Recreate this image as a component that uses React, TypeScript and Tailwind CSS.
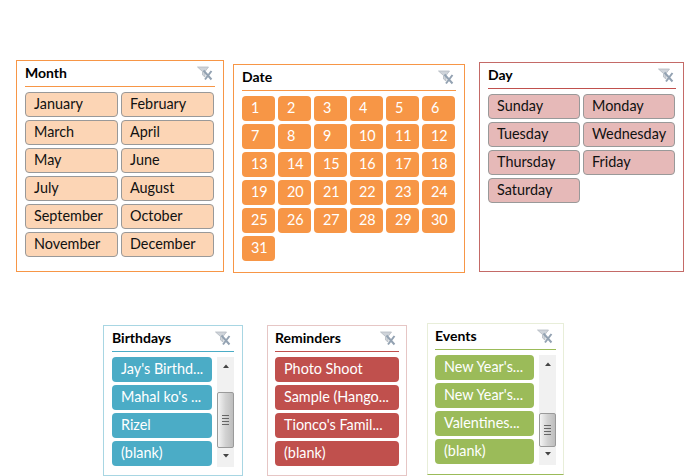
import React from "react";

function ClearIcon() {
  return (
    <svg width="16" height="15" viewBox="0 0 16 15" className="shrink-0">
      <path d="M0.500 1 H11.500 L8 5.500 V11 L5.500 9 V5.500 Z" fill="#cfd4da" stroke="#b4bac2" strokeWidth="0.8" />
      <path d="M6.500 4.500 L14.500 13.500 M14.500 5 L8 13.500" stroke="#93a2b2" strokeWidth="2" fill="none" />
    </svg>
  );
}

function Item({ label, cls }: { label: string; cls: string }) {
  return <div className={`h-[25px] flex items-center rounded-[4px] whitespace-nowrap overflow-hidden text-[14.4px] leading-none pb-[1px] ${cls}`}>{label}</div>;
}

function Header({ title, lineCls, iconCls }: { title: string; lineCls: string; iconCls: string }) {
  return (
    <div className={`h-[26px] flex items-center justify-between border-b ${lineCls}`}>
      <span className="text-[14px] font-bold text-black leading-none pb-[2px]">{title}</span>
      <span className={iconCls}><ClearIcon /></span>
    </div>
  );
}

function Scrollbar() {
  return (
    <div className="w-[17px] h-[110px] bg-[#f1f1f1] flex flex-col items-center justify-between">
      <svg width="8" height="35" viewBox="0 0 8 35" className="shrink-0"><path d="M1 11 L4 7.500 L7 11 Z" fill="#444" /></svg>
      <svg width="8" height="20" viewBox="0 0 8 20" className="shrink-0"><path d="M1 7 L4 10.500 L7 7 Z" fill="#444" /></svg>
    </div>
  );
}

function Grip() {
  return (
    <>
      <div className="w-[7px] h-px bg-[#666]" />
      <div className="w-[7px] h-px bg-[#666]" />
      <div className="w-[7px] h-px bg-[#666]" />
      <div className="w-[7px] h-px bg-[#666]" />
    </>
  );
}

const months = ["January", "February", "March", "April", "May", "June", "July", "August", "September", "October", "November", "December"];
const days = ["Sunday", "Monday", "Tuesday", "Wednesday", "Thursday", "Friday", "Saturday"];
const dates = Array.from({ length: 31 }, (_, i) => String(i + 1));
const fontStack = "font-['Lato','Carlito','Liberation_Sans',sans-serif]";

export default function App() {
  return (
    <div className={`w-[700px] h-[476px] bg-white overflow-hidden ${fontStack}`}>
      <div className="flex items-start pl-[16px] pt-[60px]">
        <div className="w-[208px] h-[212px] border border-[#f79646] pl-[8px] pr-[8px]">
          <Header title="Month" lineCls="border-[#f79646]" iconCls="mr-[2px]" />
          <div className="grid grid-cols-2 gap-x-[3px] gap-y-[3px] mt-[5px] w-[189px]">
            {months.map((m) => <Item key={m} label={m} cls="pl-[8px] bg-[#fcd5b5] border border-[#999] text-[#111]" />)}
          </div>
        </div>
        <div className="w-[232px] h-[209px] mt-[4px] ml-[9px] border border-[#f79646] pl-[8px] pr-[8px]">
          <Header title="Date" lineCls="border-[#f79646]" iconCls="mr-[2px]" />
          <div className="grid grid-cols-[repeat(6,33px)] gap-x-[3px] gap-y-[3px] mt-[5px]">
            {dates.map((d) => <Item key={d} label={d} cls="pl-[9px] bg-[#f79646] text-white" />)}
          </div>
        </div>
        <div className="w-[205px] h-[210px] mt-[2px] ml-[14px] border border-[#c46a67] pl-[8px] pr-[7px]">
          <Header title="Day" lineCls="border-[#c0504d]" iconCls="mr-[2px]" />
          <div className="grid grid-cols-2 gap-x-[3px] gap-y-[3px] mt-[5px] w-[187px]">
            {days.map((d) => <Item key={d} label={d} cls="pl-[8px] bg-[#e6b9b8] border border-[#999] text-[#111]" />)}
          </div>
        </div>
      </div>

      <div className="flex items-start pl-[103px] mt-[50px]">
        <div className="w-[140px] h-[151px] mt-[2px] border border-[#a8d6e3] pl-[8px] pr-[8px]">
          <Header title="Birthdays" lineCls="border-[#4bacc6]" iconCls="mr-[3px]" />
          <div className="flex justify-between mt-[5px]">
            <div className="w-[100px] flex flex-col gap-[3px]">
              {["Jay's Birthd...", "Mahal ko's ...", "Rizel", "(blank)"].map((t) => <Item key={t} label={t} cls="pl-[9px] bg-[#4bacc6] text-white" />)}
            </div>
            <div className="relative">
              <Scrollbar />
              <div className="absolute left-0 top-[35px] w-[17px] h-[56px] rounded-[2px] border border-[#9a9a9a] bg-gradient-to-r from-[#f4f4f4] via-[#d2d2d2] to-[#bdbdbd] flex flex-col items-center justify-center gap-[2px]">
                <Grip />
              </div>
            </div>
          </div>
        </div>
        <div className="w-[140px] h-[151px] mt-[2px] ml-[24px] border border-[#e6c6c5] pl-[7px] pr-[7px]">
          <Header title="Reminders" lineCls="border-[#c0504d]" iconCls="mr-[3px]" />
          <div className="flex flex-col gap-[3px] mt-[5px]">
            {["Photo Shoot", "Sample (Hango...", "Tionco's Famil...", "(blank)"].map((t) => <Item key={t} label={t} cls="pl-[9px] bg-[#c0504d] text-white" />)}
          </div>
        </div>
        <div className="w-[137px] h-[152px] ml-[20px] border border-[#e8eed9] border-b-[#9bbb59] pl-[7px] pr-[7px]">
          <Header title="Events" lineCls="border-[#9bbb59]" iconCls="mr-[3px]" />
          <div className="flex justify-between mt-[5px]">
            <div className="w-[99px] flex flex-col gap-[3px]">
              {["New Year's...", "New Year's...", "Valentines...", "(blank)"].map((t, i) => <Item key={i} label={t} cls="pl-[9px] bg-[#9bbb59] text-white" />)}
            </div>
            <div className="relative">
              <Scrollbar />
              <div className="absolute left-0 top-[58px] w-[17px] h-[34px] rounded-[2px] border border-[#9a9a9a] bg-gradient-to-r from-[#f4f4f4] via-[#d2d2d2] to-[#bdbdbd] flex flex-col items-center justify-center gap-[2px]">
                <Grip />
              </div>
            </div>
          </div>
        </div>
      </div>
    </div>
  );
}
